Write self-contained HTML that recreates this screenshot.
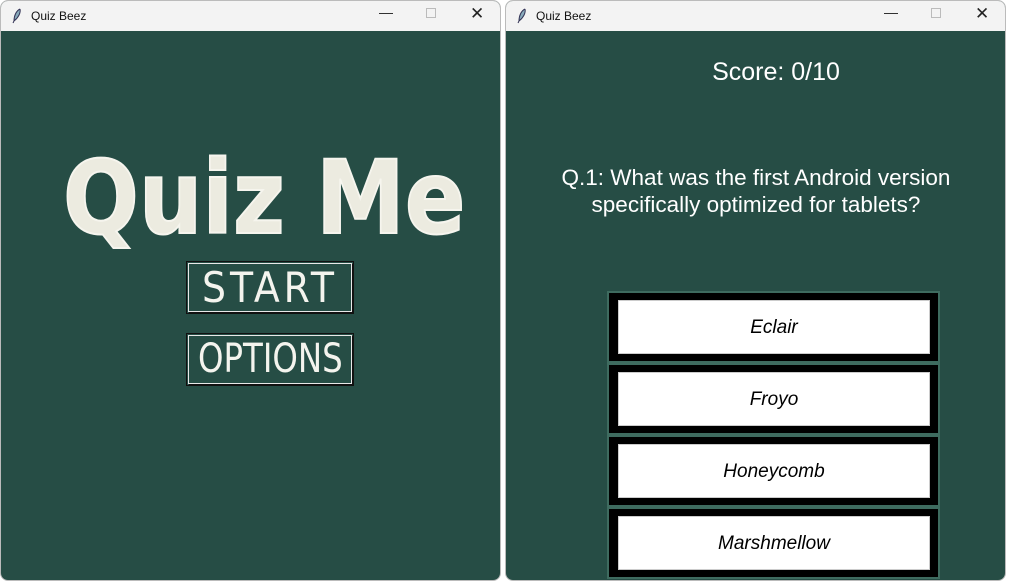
<!DOCTYPE html>
<html><head><meta charset="utf-8"><style>
*{margin:0;padding:0;box-sizing:border-box}
body{width:1012px;height:583px;background:#fff;position:relative;overflow:hidden;font-family:"Liberation Sans",Arial,sans-serif}
.win{position:absolute;top:0;height:581px;background:#264d45;border-radius:8px;overflow:hidden;border:1px solid #bbb}
.tb{position:absolute;left:0;right:0;top:0;height:30px;background:#f3f3f3;font-size:12px;color:#111}
.tb .t{position:absolute;left:30px;top:8px}
.tb .ic{position:absolute;left:10px;top:7px}
.ctl{position:absolute;top:6px;font-size:14px;color:#222}
.title{position:absolute;left:62px;top:138px;font-family:"DejaVu Sans",sans-serif;font-weight:bold;font-size:102px;color:#ecebe0;transform-origin:0 0;transform:scaleX(0.875);white-space:nowrap;-webkit-text-stroke:2px #f6f5ee}
.cb{position:absolute;left:187px;width:164px;border:1px solid #e8e8e8;box-shadow:1px 1px 0 #111;outline:1px solid #111;outline-offset:1px;color:#f4f4ee;font-family:"DejaVu Sans Condensed","Liberation Sans Narrow",sans-serif;text-align:center;white-space:nowrap}
.cb span{display:inline-block}
.q{position:absolute;font-size:22.5px;color:#fff;text-align:center;width:500px}
.ans{position:absolute;left:101px;width:333px;height:72px;background:#000;border:2px solid #3e6b5f}
.ans div{position:absolute;left:9px;top:7px;width:312px;height:54px;background:#fff;font-style:italic;font-size:19px;color:#000;text-align:center;line-height:54px;border:1px solid #ccc}
</style></head><body>
<div class="win" style="left:0;width:501px">
 <div class="tb"><svg class="ic" width="12" height="16" viewBox="0 0 12 16"><path d="M9 1C5 3 3 8 3 13l-1 2M9 1c1 4-2 9-6 12" stroke="#335" fill="#8ab" stroke-width="1"/></svg><span class="t">Quiz Beez</span>
 <span class="ctl" style="left:378px;top:3px">—</span><span class="ctl" style="left:425px;top:7px;width:10px;height:10px;border:1px solid #bbb"></span><span class="ctl" style="left:469px;top:3px;font-size:17px">✕</span></div>
 <div class="title">Quiz Me</div>
 <div class="cb" style="top:262px;height:49px;font-size:42px;line-height:47px;letter-spacing:4px">START</div>
 <div class="cb" style="top:334px;height:49px;font-size:40px;line-height:47px"><span style="transform:scaleX(0.9)">OPTIONS</span></div>
</div>
<div class="win" style="left:505px;width:501px">
 <div class="tb"><svg class="ic" width="12" height="16" viewBox="0 0 12 16"><path d="M9 1C5 3 3 8 3 13l-1 2M9 1c1 4-2 9-6 12" stroke="#335" fill="#8ab" stroke-width="1"/></svg><span class="t">Quiz Beez</span>
 <span class="ctl" style="left:378px;top:3px">—</span><span class="ctl" style="left:425px;top:7px;width:10px;height:10px;border:1px solid #bbb"></span><span class="ctl" style="left:469px;top:3px;font-size:17px">✕</span></div>
 <div class="q" style="left:20px;top:57px;font-size:25px">Score: 0/10</div>
 <div class="q" style="left:0px;top:163px;line-height:27px">Q.1: What was the first Android version<br>specifically optimized for tablets?</div>
 <div class="ans" style="top:290px"><div>Eclair</div></div>
 <div class="ans" style="top:362px"><div>Froyo</div></div>
 <div class="ans" style="top:434px"><div>Honeycomb</div></div>
 <div class="ans" style="top:506px"><div>Marshmellow</div></div>
</div>
</body></html>
